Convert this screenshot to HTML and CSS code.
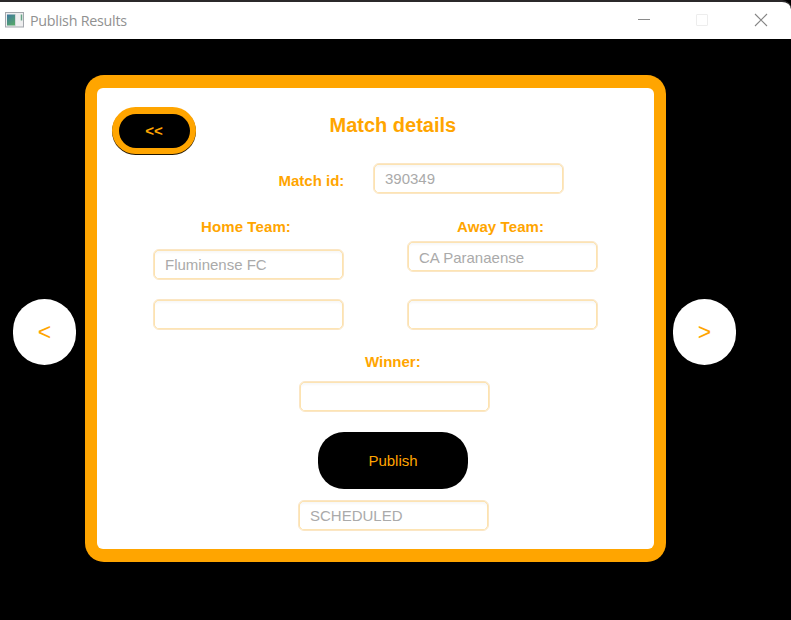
FILE: index.html
```html
<!DOCTYPE html>
<html lang="en">
<head>
<meta charset="utf-8">
<title>Publish Results</title>
<link rel="stylesheet" href="styles.css">
</head>
<body>
<header class="titlebar">
  <svg class="app-icon" width="19" height="16" viewBox="0 0 19 16">
    <defs><linearGradient id="g" x1="0" y1="0" x2="0.6" y2="1"><stop offset="0" stop-color="#3e78a0"/><stop offset="1" stop-color="#55a56c"/></linearGradient></defs>
    <rect x="0.5" y="0.5" width="18" height="14.5" fill="#eeeeef" stroke="#a3a7ad"/>
    <rect x="2" y="2.5" width="8.5" height="11" fill="url(#g)"/>
    <path d="M10.5 2v12" stroke="#d4d7da"/>
    <path d="M16.5 2.5v6" stroke="#66a487" stroke-width="1.5"/>
  </svg>
  <span class="window-title">Publish Results</span>
  <svg class="controls" width="132" height="14" viewBox="0 0 132 14" fill="none">
    <path d="M0 6.5h12" stroke="#8a8a8a"/>
    <rect x="58.5" y="1.5" width="11" height="11" rx="0.5" stroke="#ededed"/>
    <path d="M117 1l12 12M129 1L117 13" stroke="#858585" stroke-width="1.1"/>
  </svg>
</header>
<main class="stage">
  <button class="nav">&lt;</button>
  <section class="frame">
    <div class="card">
      <div class="head">
        <button class="back"><span>&lt;&lt;</span></button>
        <h1>Match details</h1>
      </div>
      <div class="match-row">
        <label>Match id:</label>
        <div class="field">390349</div>
      </div>
      <div class="teams">
        <div class="team home">
          <label>Home Team:</label>
          <div class="field">Fluminense FC</div>
          <div class="field score"></div>
        </div>
        <div class="team away">
          <label>Away Team:</label>
          <div class="field">CA Paranaense</div>
          <div class="field score"></div>
        </div>
      </div>
      <div class="result">
        <label>Winner:</label>
        <div class="field winner"></div>
        <button class="publish">Publish</button>
        <div class="field status">SCHEDULED</div>
      </div>
    </div>
  </section>
  <button class="nav next">&gt;</button>
</main>
</body>
</html>
```
FILE: styles.css
```css
* { box-sizing: border-box; }
body {
  margin: 0;
  width: 791px;
  height: 620px;
  overflow: hidden;
  background: #000;
  font-family: "Liberation Sans", Arial, sans-serif;
  font-size: 15px;
}
button { border: 0; padding: 0; font-family: inherit; color: #ffa500; }
.titlebar {
  height: 39px;
  border-top: 2px solid #2b292a;
  border-radius: 0 9px 0 0;
  background: #fff;
  display: flex;
  align-items: center;
  padding-left: 5px;
}
.app-icon { margin-top: -2px; }
.window-title {
  margin-left: 6px;
  font: 14.3px "Open Sans", "Noto Sans", sans-serif;
  letter-spacing: -0.25px;
  color: #919191;
  width: 98px;
  white-space: nowrap;
}
.controls { margin-left: 510px; margin-top: -1px; }
.stage { display: flex; align-items: flex-start; padding: 36px 0 0 13px; }
.nav {
  width: 63px;
  height: 66px;
  margin-top: 224px;
  border-radius: 32px;
  background: #fff;
  font-size: 23px;
}
.next { margin-left: 7px; }
.frame {
  width: 581.5px;
  height: 486.5px;
  margin-left: 8.5px;
  padding: 12.5px;
  border-radius: 19px;
  background: #ffa500;
}
.card { height: 461.5px; border-radius: 6px; background: #fff; }
.head { display: flex; height: 75px; padding: 19.5px 0 0 15px; }
.back {
  width: 84px;
  height: 47px;
  padding: 6.5px;
  border-radius: 24px;
  background: #ffa500;
  box-shadow: 0 1px 0 #211500;
  font-size: 15px;
  font-weight: bold;
}
.back span {
  display: flex;
  align-items: center;
  justify-content: center;
  height: 34px;
  border-radius: 17px;
  background: #000;
}
h1 { margin: 6px 0 0 133.5px; font-size: 20px; line-height: 24px; color: #ffa500; }
label { color: #ffa500; font-weight: bold; line-height: 18px; white-space: nowrap; letter-spacing: 0.1px; }
.match-row { display: flex; padding-left: 181.5px; height: 55px; }
.match-row label { width: 94.5px; margin-top: 9.5px; letter-spacing: 0; }
.field {
  width: 191px;
  height: 31px;
  border: 1px solid #fbe6c4;
  border-radius: 6px;
  padding: 0 0 0 11px;
  line-height: 29px;
  color: #aaa;
  background: #fff;
  box-shadow: inset 0 0 0 0.8px #fddc9c, inset 0 3px 2px #f8f8f8;
}
.teams { display: flex; padding-left: 56px; }
.team { display: flex; flex: none; flex-direction: column; width: 254px; height: 113px; }
.team label { padding-left: 48px; }
.away label { padding-left: 50px; }
.home .field { margin-top: 13.5px; }
.home .score { margin-top: 19px; }
.away .field { margin-top: 5.5px; line-height: 31px; }
.away .score { margin-top: 27px; }
.result { display: flex; flex-direction: column; margin-top: 22px; padding-left: 202px; }
.result label { padding-left: 66px; letter-spacing: 0; }
.winner { margin-top: 10.5px; }
.publish {
  width: 150px;
  height: 57.5px;
  margin: 19.5px 0 10.5px 19px;
  padding-top: 1px;
  border-radius: 26px;
  background: #000;
  font-size: 15px;
}
.status { margin-left: -1px; }
```
